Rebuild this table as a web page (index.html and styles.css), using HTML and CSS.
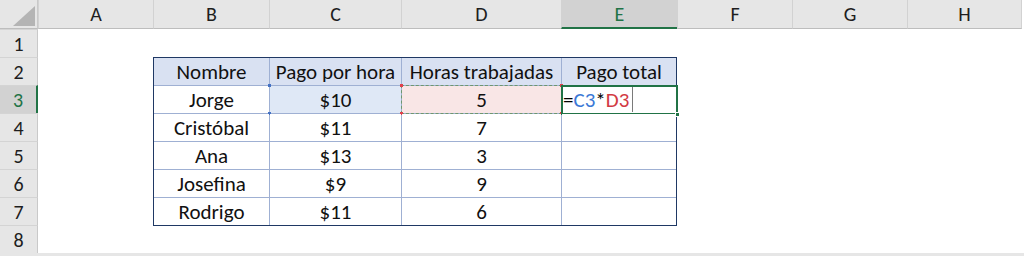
FILE: index.html
```html
<!DOCTYPE html>
<html lang="es">
<head>
<meta charset="utf-8">
<title>Hoja de cálculo</title>
<link rel="stylesheet" href="styles.css">
</head>
<body>
<div class="sheet">
  <div class="corner"><span class="tri"></span></div>
  <div class="ch">A</div>
  <div class="ch">B</div>
  <div class="ch">C</div>
  <div class="ch">D</div>
  <div class="ch sel">E</div>
  <div class="ch">F</div>
  <div class="ch">G</div>
  <div class="ch last">H</div>

  <div class="tbl">
    <div class="c th">Nombre</div>
    <div class="c th">Pago por hora</div>
    <div class="c th">Horas trabajadas</div>
    <div class="c th">Pago total</div>

    <div class="c">Jorge</div>
    <div class="c ref-c">$10<span class="dot tl"></span><span class="dot tr"></span><span class="dot bl"></span><span class="dot br"></span></div>
    <div class="c ref-d">5<span class="ants"></span><span class="rdot tl"></span><span class="rdot tr"></span><span class="rdot bl"></span><span class="rdot br"></span></div>
    <div class="c edit"><span class="f-op">=</span><span class="f-c">C3</span><span class="f-op">*</span><span class="f-d">D3</span><span class="caret"></span><span class="active"></span><span class="handle"></span></div>

    <div class="c">Cristóbal</div>
    <div class="c">$11</div>
    <div class="c">7</div>
    <div class="c"></div>

    <div class="c">Ana</div>
    <div class="c">$13</div>
    <div class="c">3</div>
    <div class="c"></div>

    <div class="c">Josefina</div>
    <div class="c">$9</div>
    <div class="c">9</div>
    <div class="c"></div>

    <div class="c">Rodrigo</div>
    <div class="c">$11</div>
    <div class="c">6</div>
    <div class="c"></div>
  </div>

  <div class="rh">1</div>
  <div class="rh">2</div>
  <div class="rh sel">3</div>
  <div class="rh">4</div>
  <div class="rh">5</div>
  <div class="rh">6</div>
  <div class="rh">7</div>
  <div class="rh">8</div>
</div>
</body>
</html>
```

FILE: styles.css
```css
* { box-sizing: border-box; }

html, body {
  margin: 0;
  padding: 0;
  background: #ffffff;
}

body {
  font-family: Carlito, Lato, "Open Sans", sans-serif;
  font-size: 20px;
  color: #000;
  width: 1024px;
  height: 256px;
  overflow: hidden;
  background: #e6e6e6;
}

.sheet {
  display: grid;
  grid-template-columns: 38px 115px 116px 132px 160px 116px 115px 115px 115px 2px;
  grid-template-rows: 29px repeat(8, 28px);
  background: #ffffff;
  width: 1024px;
}

.corner {
  grid-column: 1;
  grid-row: 1;
  background: #e6e6e6;
  border-right: 1px solid #c9c9c9;
  border-bottom: 1px solid #bdbdbd;
  display: flex;
  align-items: flex-end;
  justify-content: flex-end;
  padding: 0 2px 2px 0;
}

.tri {
  width: 0;
  height: 0;
  border-left: 22px solid transparent;
  border-bottom: 20px solid #b4b4b4;
}

.ch {
  grid-row: 1;
  background: #e6e6e6;
  border-left: 1px solid #d2d2d2;
  border-bottom: 1px solid #bdbdbd;
  display: flex;
  justify-content: center;
  align-items: flex-end;
  line-height: 20px;
  padding-bottom: 4px;
  color: #1e1e1e;
}

.ch.last {
  border-right: 1px solid #d2d2d2;
}

.ch.sel {
  background: #d2d2d2;
  color: #217346;
  border-bottom: 2px solid #217346;
  padding-bottom: 3px;
}

.rh {
  grid-column: 1;
  background: #e6e6e6;
  border-top: 1px solid #d4d4d4;
  border-right: 1px solid #c9c9c9;
  display: flex;
  justify-content: center;
  align-items: flex-end;
  line-height: 20px;
  padding-bottom: 3px;
  color: #1e1e1e;
}

.rh.sel {
  background: #d2d2d2;
  color: #217346;
  border-right: 2px solid #217346;
}

.tbl {
  grid-column: 3 / 7;
  grid-row: 3 / 9;
  align-self: start;
  display: grid;
  grid-template-columns: 115px 131px 159px 114px;
  grid-template-rows: repeat(6, 27px);
  gap: 1px;
  background: #9fb0d3;
  border: 1px solid #1f3864;
  font-size: 21px;
}

.c {
  position: relative;
  background: #ffffff;
  display: flex;
  justify-content: center;
  align-items: flex-end;
  line-height: 21px;
  padding-bottom: 2px;
  white-space: nowrap;
  color: #111;
}

.c.th {
  background: #d9e1f2;
}

.ref-c {
  background: #dfe8f6;
}

.ref-d {
  background: #f9e6e6;
}

.dot {
  position: absolute;
  width: 3px;
  height: 3px;
  background: #4472c4;
}

.rdot {
  position: absolute;
  width: 3px;
  height: 3px;
  background: #e0404c;
}

.tl { left: -2px; top: -2px; }
.tr { right: -2px; top: -2px; }
.bl { left: -2px; bottom: -2px; }
.br { right: -2px; bottom: -2px; }

.ants {
  position: absolute;
  left: -1px;
  top: -1px;
  right: -1px;
  bottom: -1px;
  border: 1px dashed #6e976e;
}

.edit {
  justify-content: flex-start;
  padding-left: 1px;
}

.f-op { color: #000; }
.f-c { color: #3a78d6; }
.f-d { color: #d23a43; }

.caret {
  align-self: stretch;
  width: 1px;
  background: #7a7a7a;
  margin: -1px 0 -1px 3px;
}

.active {
  position: absolute;
  left: -1px;
  top: -1px;
  right: -2px;
  bottom: -2px;
  border: 2px solid #217346;
}

.handle {
  position: absolute;
  right: -4px;
  bottom: -4px;
  width: 5px;
  height: 5px;
  background: #217346;
  border: 1px solid #ffffff;
}
```
